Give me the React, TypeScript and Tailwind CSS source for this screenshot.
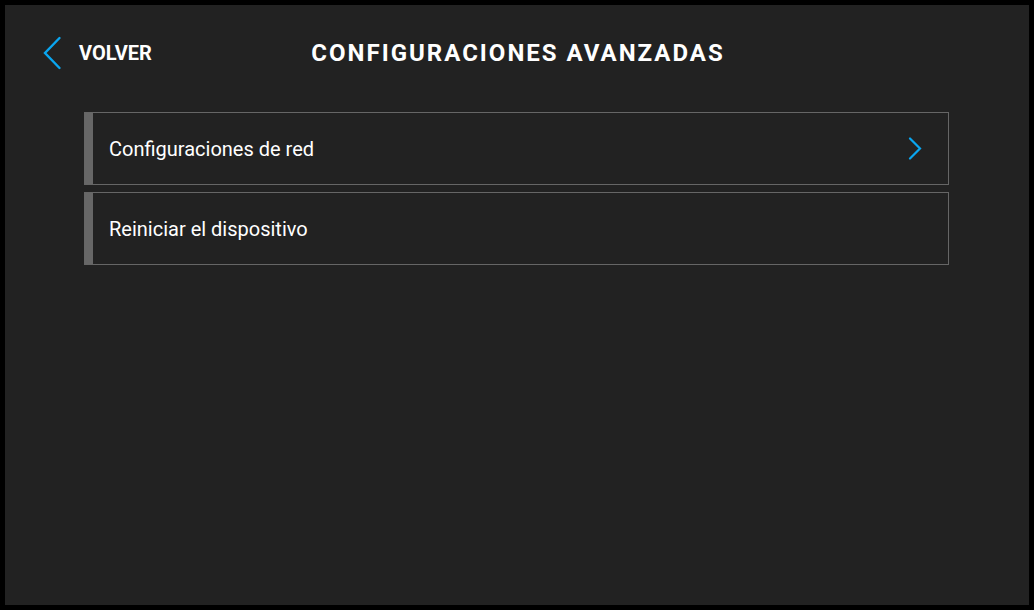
import React from "react";

function ChevronLeft() {
  return (
    <svg width="20" height="34" viewBox="0 0 20 34" fill="none">
      <path d="M17.5 2 L3 17 L17.5 32" stroke="#0aa6f0" strokeWidth="2.4" strokeLinecap="round" strokeLinejoin="miter" />
    </svg>
  );
}

function ChevronRight() {
  return (
    <svg width="14" height="23" viewBox="0 0 14 23" fill="none">
      <path d="M2 1.5 L12 11.5 L2 21.5" stroke="#0aa6f0" strokeWidth="2.2" strokeLinecap="round" />
    </svg>
  );
}

function Row({ label, chevron }: { label: string; chevron?: boolean }) {
  return (
    <div className="flex h-[73px] items-center border border-[#666666] bg-[#222222]">
      <div className="h-full w-[8px] bg-[#676767]" />
      <div className="flex flex-1 items-center justify-between pl-[16px] pr-[26px]">
        <span className="text-[20px] text-white" style={{ fontFamily: "Roboto, sans-serif" }}>{label}</span>
        {chevron && <ChevronRight />}
      </div>
    </div>
  );
}

export default function App() {
  return (
    <div className="h-[610px] w-[1034px] bg-black p-[5px]" style={{ fontFamily: "Roboto, sans-serif" }}>
      <div className="flex h-full w-full flex-col bg-[#222222]">
        <div className="grid h-[92px] grid-cols-[1fr_auto_1fr] items-center pt-[3px]">
          <div className="flex items-center pl-[37px]">
            <ChevronLeft />
            <span className="ml-[17px] text-[20px] font-bold text-white">VOLVER</span>
          </div>
          <h1 className="pl-[2px] text-[24px] font-bold tracking-[2px] text-white">CONFIGURACIONES AVANZADAS</h1>
          <div />
        </div>
        <div className="mt-[15px] flex flex-col gap-[7px] pl-[79px] pr-[80px]">
          <Row label="Configuraciones de red" chevron />
          <Row label="Reiniciar el dispositivo" />
        </div>
      </div>
    </div>
  );
}
